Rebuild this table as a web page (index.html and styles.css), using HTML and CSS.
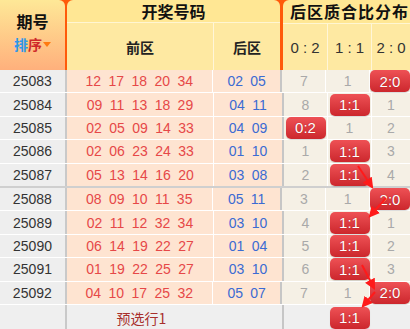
FILE: index.html
```html
<!DOCTYPE html>
<html lang="zh">
<head>
<meta charset="utf-8">
<link rel="stylesheet" href="styles.css">
</head>
<body>
<div class="board">
  <div class="head">
    <div class="h-issue">
      <div class="h-title">期号</div>
      <div class="h-sort"><span class="s1">排</span><span class="s2">序</span><span class="tri"></span></div>
    </div>
    <div class="h-draw">
      <div class="h-top">开奖号码</div>
      <div class="h-sub">
        <div class="h-front">前区</div>
        <div class="h-back">后区</div>
      </div>
    </div>
    <div class="h-dist">
      <div class="h-top h-top-dist">后区质合比分布</div>
      <div class="h-sub">
        <div class="h-r h-r1">0 : 2</div>
        <div class="h-r h-r2">1 : 1</div>
        <div class="h-r h-r3">2 : 0</div>
      </div>
    </div>
  </div>

  <div class="rows">
    <div class="row"><div class="c-issue">25083</div><div class="c-front">12 17 18 20 34</div><div class="c-back">02 05</div><div class="c-r c-r1">7</div><div class="c-r c-r2">1</div><div class="c-r c-r3"><span class="badge">2:0</span></div></div>
    <div class="row"><div class="c-issue">25084</div><div class="c-front">09 11 13 18 29</div><div class="c-back">04 11</div><div class="c-r c-r1">8</div><div class="c-r c-r2"><span class="badge">1:1</span></div><div class="c-r c-r3">1</div></div>
    <div class="row"><div class="c-issue">25085</div><div class="c-front">02 05 09 14 33</div><div class="c-back">04 09</div><div class="c-r c-r1"><span class="badge">0:2</span></div><div class="c-r c-r2">1</div><div class="c-r c-r3">2</div></div>
    <div class="row"><div class="c-issue">25086</div><div class="c-front">02 06 23 24 33</div><div class="c-back">01 10</div><div class="c-r c-r1">1</div><div class="c-r c-r2"><span class="badge">1:1</span></div><div class="c-r c-r3">3</div></div>
    <div class="row row-split"><div class="c-issue">25087</div><div class="c-front">05 13 14 16 20</div><div class="c-back">03 08</div><div class="c-r c-r1">2</div><div class="c-r c-r2"><span class="badge">1:1</span></div><div class="c-r c-r3">4</div></div>
    <div class="row"><div class="c-issue">25088</div><div class="c-front">08 09 10 11 35</div><div class="c-back">05 11</div><div class="c-r c-r1">3</div><div class="c-r c-r2">1</div><div class="c-r c-r3"><span class="badge">2:0</span></div></div>
    <div class="row"><div class="c-issue">25089</div><div class="c-front">02 11 12 32 34</div><div class="c-back">03 10</div><div class="c-r c-r1">4</div><div class="c-r c-r2"><span class="badge">1:1</span></div><div class="c-r c-r3">1</div></div>
    <div class="row"><div class="c-issue">25090</div><div class="c-front">06 14 19 22 27</div><div class="c-back">01 04</div><div class="c-r c-r1">5</div><div class="c-r c-r2"><span class="badge">1:1</span></div><div class="c-r c-r3">2</div></div>
    <div class="row"><div class="c-issue">25091</div><div class="c-front">01 19 22 25 27</div><div class="c-back">03 10</div><div class="c-r c-r1">6</div><div class="c-r c-r2"><span class="badge">1:1</span></div><div class="c-r c-r3">3</div></div>
    <div class="row"><div class="c-issue">25092</div><div class="c-front">04 10 17 25 32</div><div class="c-back">05 07</div><div class="c-r c-r1">7</div><div class="c-r c-r2">1</div><div class="c-r c-r3"><span class="badge">2:0</span></div></div>
    <div class="row row-foot"><div class="c-issue"></div><div class="c-front foot-label">预选行1</div><div class="c-back"></div><div class="c-r c-r1"></div><div class="c-r c-r2"><span class="badge">1:1</span></div><div class="c-r c-r3"></div></div>
  </div>

  <svg class="arrows" width="410" height="329" viewBox="0 0 410 329">
    <defs>
      <marker id="ah" viewBox="0 0 10 10" refX="8" refY="5" markerWidth="5.5" markerHeight="5.5" orient="auto" markerUnits="strokeWidth">
        <path d="M0,0 L10,5 L0,10 Z" fill="#ff1a1a"/>
      </marker>
    </defs>
    <line x1="358" y1="166" x2="372" y2="187" stroke="#ff1a1a" stroke-width="2" marker-end="url(#ah)"/>
    <line x1="386" y1="198" x2="370" y2="216" stroke="#ff1a1a" stroke-width="2" marker-end="url(#ah)"/>
    <line x1="362" y1="265" x2="374" y2="288" stroke="#ff1a1a" stroke-width="2" marker-end="url(#ah)"/>
    <line x1="375" y1="292" x2="363" y2="306" stroke="#ff1a1a" stroke-width="2" marker-end="url(#ah)"/>
  </svg>
</div>
</body>
</html>
```
FILE: styles.css
```css
* { box-sizing: border-box; }
html, body { margin: 0; padding: 0; background: #efefef; }
body { font-family: "Liberation Sans", Arial, "Noto Sans CJK SC", sans-serif; }

.board { position: relative; width: 410px; height: 329px; overflow: hidden; }

/* header */
.head { display: flex; height: 70px; background: #ff5a0a; }
.h-issue {
  width: 65px; margin-right: 2px; border-top-right-radius: 6px;
  background: linear-gradient(#fee897, #ffb07c);
  display: flex; flex-direction: column; align-items: center; justify-content: flex-start; gap: 1px;
  padding-top: 10px;
}
.h-title { height: 23px; font-family: "Noto Sans CJK SC", sans-serif; font-weight: 700; font-size: 16px; line-height: 23px; color: #111; }
.h-sort { height: 20px; display: flex; align-items: center; font-family: "Noto Sans CJK SC", sans-serif; font-weight: 700; font-size: 14px; line-height: 20px; }
.s1 { color: #2d97ea; }
.s2 { color: #cf2a2a; }
.tri { width: 0; height: 0; margin-left: 1px; border-left: 4px solid transparent; border-right: 4px solid transparent; border-top: 5px solid #ff7a10; }

.h-draw { width: 213px; margin-right: 3px; display: flex; flex-direction: column; border-radius: 6px 6px 0 0; overflow: hidden; }
.h-dist { flex: 1; display: flex; flex-direction: column; border-top-left-radius: 6px; overflow: hidden; }
.h-top {
  height: 23px; background: #ffe794; border-bottom: 1px solid #fff6d2;
  font-family: "Noto Sans CJK SC", sans-serif; font-weight: 700; font-size: 16px; line-height: 22px; color: #111;
  text-align: center;
}
.h-top-dist { height: 24px; line-height: 23px; text-align: left; padding-left: 7px; letter-spacing: 1px; white-space: nowrap; }
.h-sub { flex: 1; display: flex; background: #fee9a2; }
.h-front, .h-back {
  display: flex; align-items: center; justify-content: center;
  font-family: "Noto Sans CJK SC", sans-serif; font-weight: 700; font-size: 14px; color: #222;
}
.h-front { width: 147px; border-right: 1px solid #fff6d8; }
.h-back { flex: 1; }
.h-r { display: flex; align-items: center; justify-content: center; font-size: 15px; color: #333; border-right: 1px solid #fff6d8; }
.h-r1 { width: 45px; }
.h-r2 { width: 44px; }
.h-r3 { flex: 1; border-right: 0; }

/* rows */
.rows { display: flex; flex-direction: column; }
.row { display: flex; height: 23.4px; border-bottom: 1px solid #ffffff; font-size: 14px; }
.row-split { height: 24.4px; border-bottom: 2px solid #cfcfcf; }
.row > div { display: flex; align-items: center; justify-content: center; white-space: nowrap; }
.c-issue { width: 67px; background: #eeeeee; color: #333; border-right: 2px solid #c9c9c9; }
.c-front { width: 147px; background: #fee4d1; color: #e64848; border-right: 1px solid #fff; word-spacing: 3.5px; }
.c-back { width: 70px; background: #fee4d1; color: #3b6bd3; border-right: 2px solid #c6c6c6; word-spacing: 3.5px; }
.c-r { background: #f5f0e5; color: #a9a9a9; border-right: 1px solid #fff; }
.c-r1 { width: 44px; }
.c-r2 { width: 44px; }
.c-r3 { flex: 1; border-right: 0; }

.row-foot { height: 26px; border-bottom: 0; }
.row-foot > div { background: #efefef; }
.row-foot .c-front, .row-foot .c-r { border-right-color: #efefef; }
.foot-label { font-family: "Noto Sans CJK SC", sans-serif; color: #a8302c; font-size: 14px; padding-left: 3px; }

.badge {
  display: inline-flex; align-items: center; justify-content: center;
  width: 40px; height: 22px; border-radius: 5px;
  background: linear-gradient(#ee5155, #cc272d);
  color: #fff; font-size: 15px; text-shadow: 0 0 1px rgba(120,0,0,0.6);
  box-shadow: 0 1px 1px rgba(0,0,0,0.15);
}

.arrows { position: absolute; left: 0; top: 0; pointer-events: none; }
```
